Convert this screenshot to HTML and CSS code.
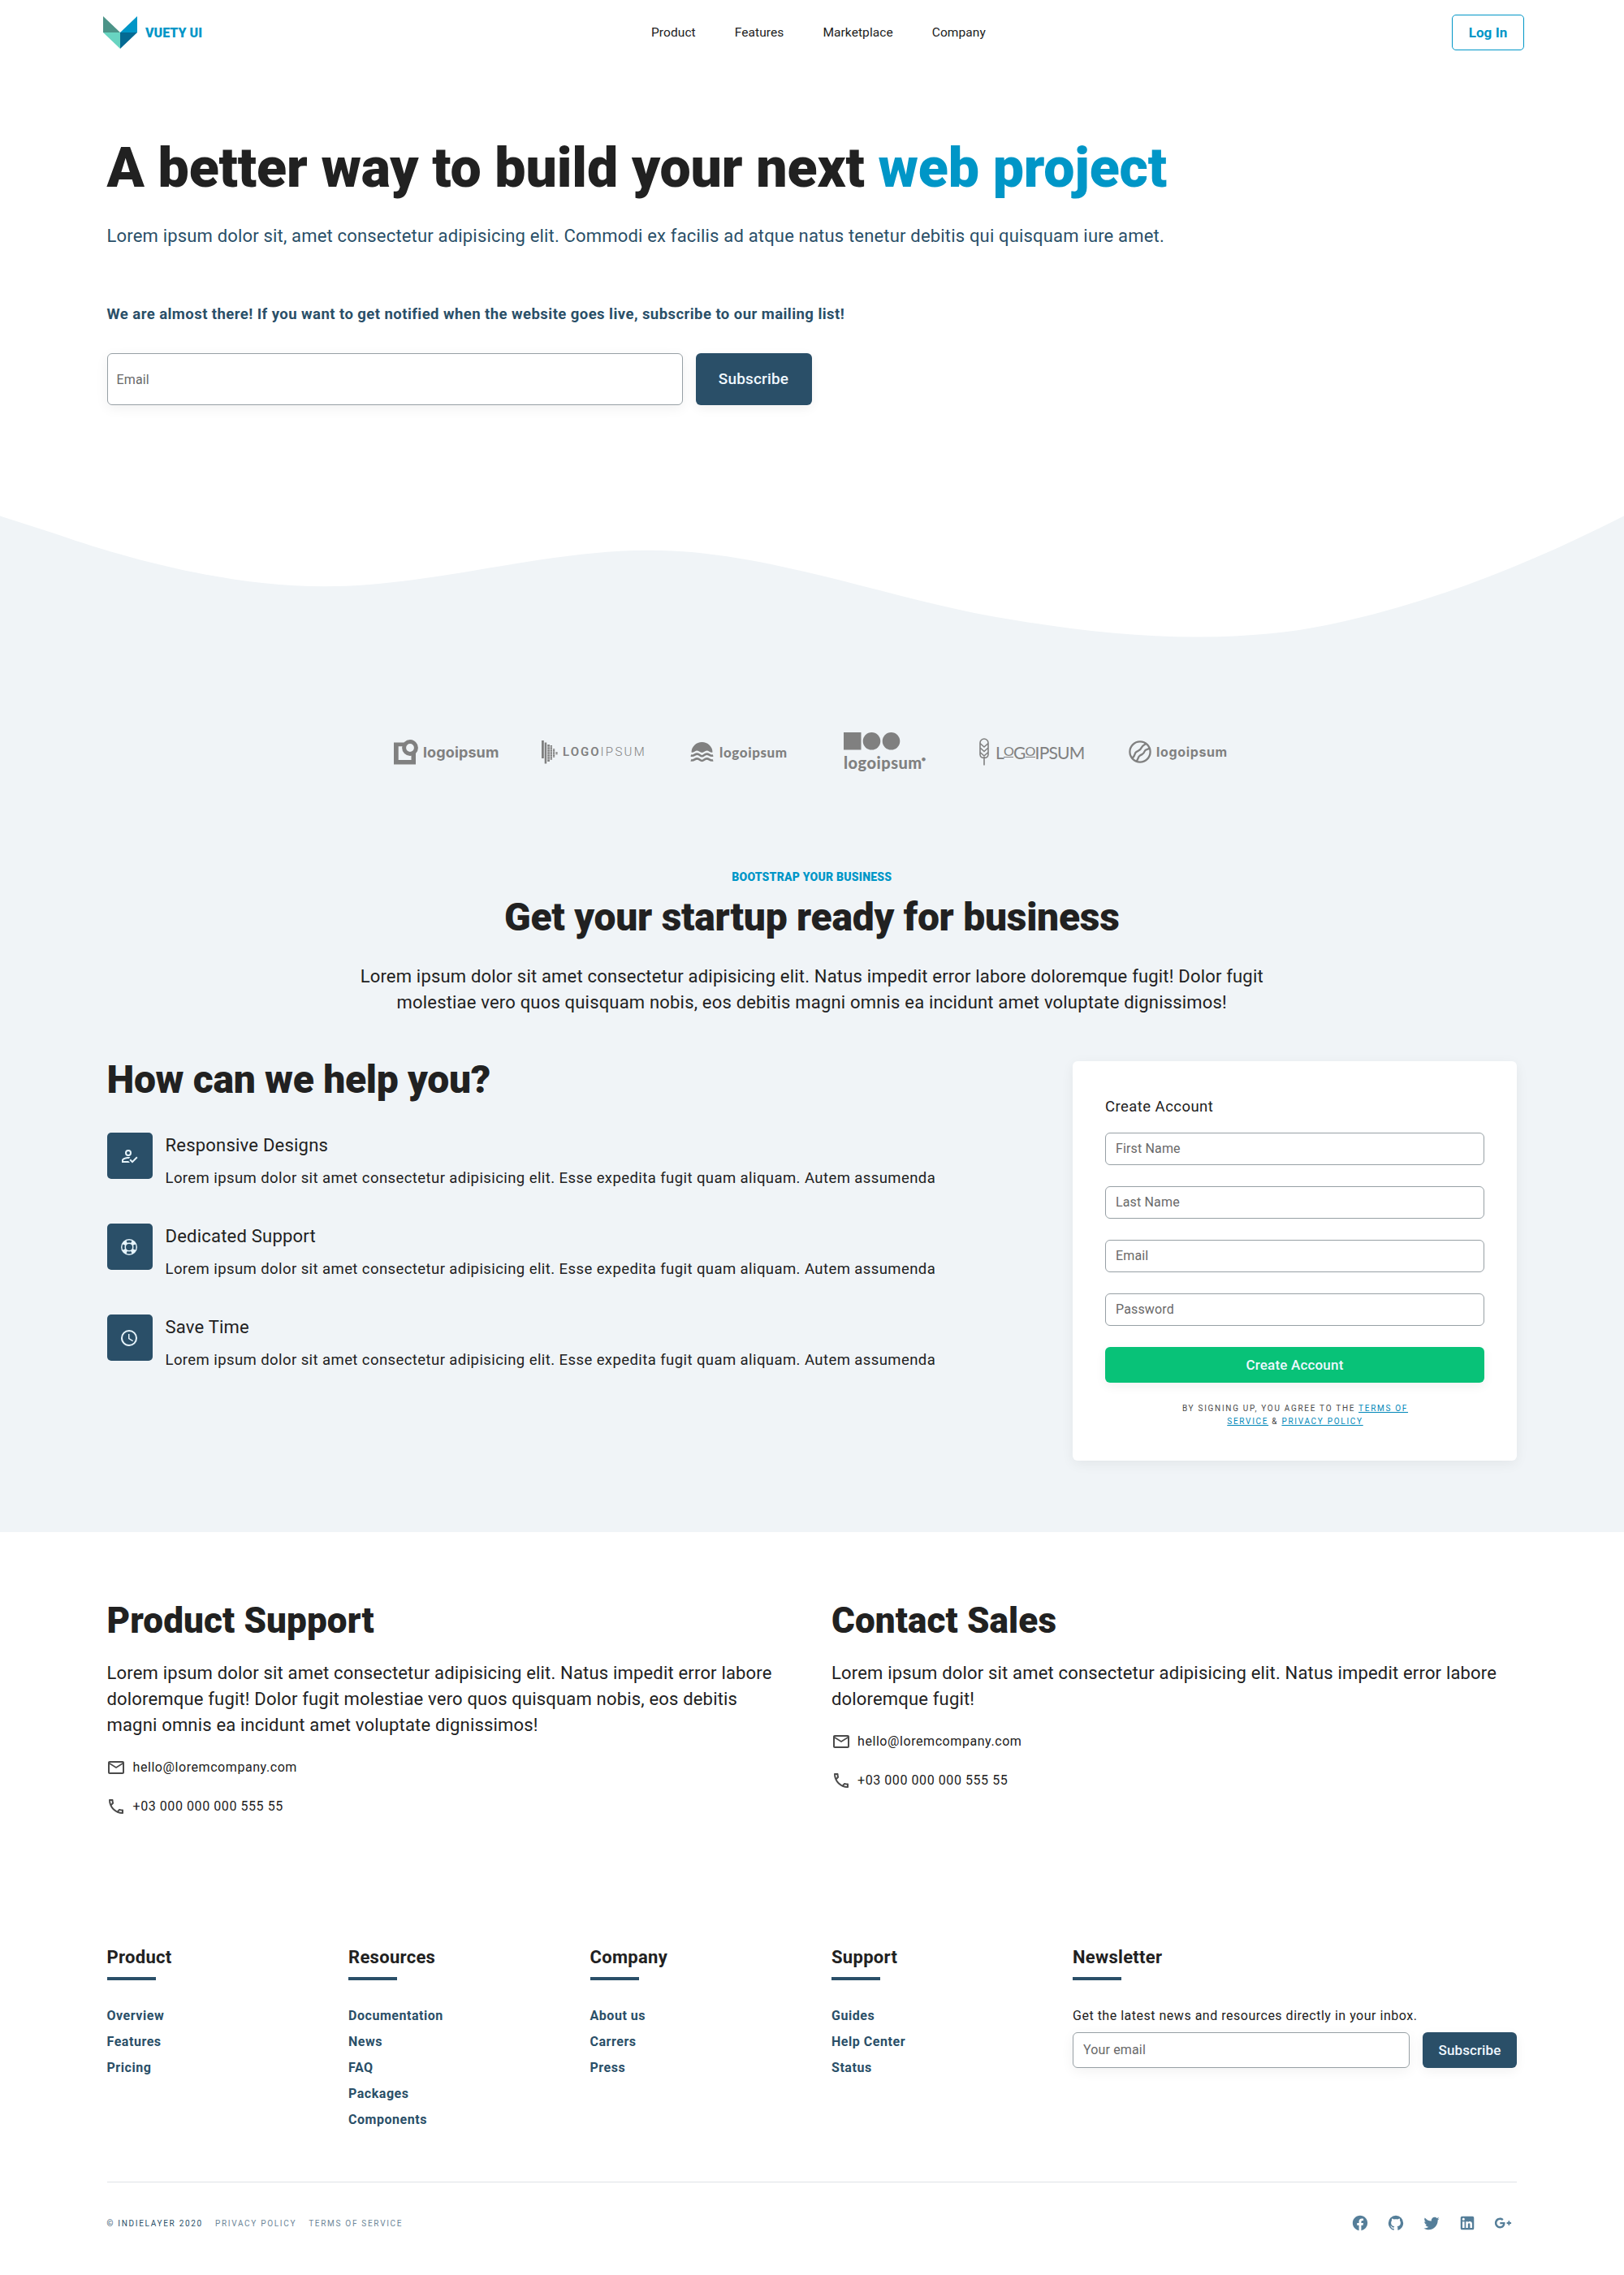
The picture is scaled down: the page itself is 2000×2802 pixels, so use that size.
FILE: index.html
```
<!DOCTYPE html>
<html lang="en">
<head>
<meta charset="utf-8">
<title>Vuety UI</title>
<link rel="stylesheet" href="styles.css">
</head>
<body>
<header class="header">
  <a class="brand">
    <svg class="brand-mark" viewBox="0 0 42 40"><path fill="#4c9488" d="M0 0L21 20H0z"/><path fill="#0096c7" d="M42 0L21 20H42z"/><path fill="#68d4c1" d="M0 20H21V40z"/><path fill="#056a93" d="M42 20H21V40z"/></svg>
    <span class="brand-name">VUETY UI</span>
  </a>
  <nav class="nav"><a>Product</a><a>Features</a><a>Marketplace</a><a>Company</a></nav>
  <a class="login">Log In</a>
</header>

<section class="hero">
  <h1 class="hero-title">A better way to build your next <span class="accent">web project</span></h1>
  <p class="hero-text">Lorem ipsum dolor sit, amet consectetur adipisicing elit. Commodi ex facilis ad atque natus tenetur debitis qui quisquam iure amet.</p>
  <p class="hero-note">We are almost there! If you want to get notified when the website goes live, subscribe to our mailing list!</p>
  <div class="hero-form">
    <div class="field field-large">Email</div>
    <div class="btn btn-large">Subscribe</div>
  </div>
</section>

<svg class="wave" viewBox="0 0 2000 180" preserveAspectRatio="none"><path d="M0 15.5L67 37C133 60 267 102.3 400 102.3C533 102.3 667 57.7 800 57.7C933 57.7 1067 108 1200 135C1333 160 1467 175 1600 156C1733 134 1867 83 2000 15.5V180H0z"/></svg>

<section class="business">
  <div class="logos">
    <div class="logo logo-a">
      <svg width="31" height="31" viewBox="0 0 31 31"><path fill-rule="evenodd" d="M0 3.5H27V30.5H0zM5.7 8.3V25H21.5V18L12 8.3z"/><circle class="badge" cx="20" cy="10" r="7.4"/></svg>
      <span>logoipsum</span>
    </div>
    <div class="logo logo-b">
      <svg width="20" height="30" viewBox="0 0 20 30"><path d="M0 1h2.8v22H0zM3.7 3.5h2.5v26H3.7zM7.2 6h2.7v21H7.2zM10.6 7h2.4v18h-2.4zM14 11h2.2v11H14zM17.4 15h2.2v3.6h-2.2z"/><path class="cut" d="M7 9h13M7 12h13M7 15h13M7 18h13M7 21h13M7 24h13"/></svg>
      <span><b>LOGO</b><i>IPSUM</i></span>
    </div>
    <div class="logo logo-c">
      <svg width="29" height="25" viewBox="0 0 29 25"><path d="M1.5 12.5A13 12.5 0 0 1 27.5 12.5C24 13.5 23 10.5 20.5 10.5S17 13 14.5 13 11 10.5 8.5 10.5 5 13.5 1.5 12.5z"/><path class="stroke" d="M.8 16.6C5 17.6 5.5 14.6 8.5 14.6S12 17.2 14.5 17.2 17.5 14.6 20.5 14.6 24 17.6 28.2 16.6M.8 22.4C5 23.4 5.5 20.4 8.5 20.4S12 23 14.5 23 17.5 20.4 20.5 20.4 24 23.4 28.2 22.4"/></svg>
      <span>logoipsum</span>
    </div>
    <div class="logo logo-d">
      <svg width="70" height="22" viewBox="0 0 70 22"><path d="M0 0h21.5v21.5H0z"/><circle cx="34.5" cy="10.8" r="10.8"/><circle cx="58.5" cy="10.8" r="10.8"/></svg>
      <span>logoipsum<sup>●</sup></span>
    </div>
    <div class="logo logo-e">
      <svg width="12" height="34" viewBox="0 0 12 34"><path class="stroke" d="M6 33.5V23M1 6a5 5 0 0 1 10 0V20.5A5 4.5 0 0 1 6 24.5 5 4.5 0 0 1 1 20.5zM1 6.5L6 11 11 6.5M1 12L6 16.5 11 12M1 17.5L6 22 11 17.5"/></svg>
      <span>L<u>O</u>G<u>O</u>IPSUM</span>
    </div>
    <div class="logo logo-f">
      <svg width="28" height="28" viewBox="0 0 28 28"><circle class="stroke" cx="14" cy="14" r="12.6"/><path class="stroke" d="M4 21.5C8 20.5 6.5 16 9.5 14S14.5 12 16 8.5 20 5.5 21 4M9 25.5C12.5 24 10.5 20.5 14 18.5S18.5 17 19.5 13.5 24 11.5 25.5 9.5"/></svg>
      <span>logoipsum</span>
    </div>
  </div>

  <div class="intro">
    <div class="intro-kicker">BOOTSTRAP YOUR BUSINESS</div>
    <h2 class="intro-title">Get your startup ready for business</h2>
    <p class="intro-text">Lorem ipsum dolor sit amet consectetur adipisicing elit. Natus impedit error labore doloremque fugit! Dolor fugit molestiae vero quos quisquam nobis, eos debitis magni omnis ea incidunt amet voluptate dignissimos!</p>
  </div>

  <div class="help">
    <div class="help-main">
      <h2 class="help-title">How can we help you?</h2>
      <div class="features">
        <div class="feature">
          <div class="feature-icon"><svg viewBox="0 0 24 24"><path d="M21.1 12.5L22.5 13.91L15.97 20.5L12.5 17L13.9 15.59L15.97 17.67L21.1 12.5M11 4A4 4 0 0 1 15 8A4 4 0 0 1 11 12A4 4 0 0 1 7 8A4 4 0 0 1 11 4M11 6A2 2 0 0 0 9 8A2 2 0 0 0 11 10A2 2 0 0 0 13 8A2 2 0 0 0 11 6M11 13C11.68 13 12.5 13.09 13.41 13.26L11.74 14.93L11 14.9C8.03 14.9 4.9 16.36 4.9 17V18.1H11.1L13 20H3V17C3 14.34 8.33 13 11 13Z"/></svg></div>
          <div><h3>Responsive Designs</h3><p>Lorem ipsum dolor sit amet consectetur adipisicing elit. Esse expedita fugit quam aliquam. Autem assumenda</p></div>
        </div>
        <div class="feature">
          <div class="feature-icon"><svg viewBox="0 0 24 24"><path d="M19.79,15.41C20.74,13.24 20.74,10.75 19.79,8.59L17.05,9.83C17.65,11.21 17.65,12.78 17.06,14.17L19.79,15.41M15.42,4.21C13.25,3.26 10.76,3.26 8.59,4.21L9.83,6.94C11.22,6.35 12.79,6.35 14.18,6.95L15.42,4.21M4.21,8.58C3.26,10.76 3.26,13.24 4.21,15.42L6.95,14.17C6.35,12.79 6.35,11.21 6.95,9.82L4.21,8.58M8.59,19.79C10.76,20.74 13.25,20.74 15.42,19.78L14.18,17.05C12.8,17.65 11.22,17.65 9.84,17.06L8.59,19.79M12,2A10,10 0 0,1 22,12A10,10 0 0,1 12,22A10,10 0 0,1 2,12A10,10 0 0,1 12,2M12,8A4,4 0 0,0 8,12A4,4 0 0,0 12,16A4,4 0 0,0 16,12A4,4 0 0,0 12,8Z"/></svg></div>
          <div><h3>Dedicated Support</h3><p>Lorem ipsum dolor sit amet consectetur adipisicing elit. Esse expedita fugit quam aliquam. Autem assumenda</p></div>
        </div>
        <div class="feature">
          <div class="feature-icon"><svg viewBox="0 0 24 24"><path d="M12,20A8,8 0 0,0 20,12A8,8 0 0,0 12,4A8,8 0 0,0 4,12A8,8 0 0,0 12,20M12,2A10,10 0 0,1 22,12A10,10 0 0,1 12,22C6.47,22 2,17.5 2,12A10,10 0 0,1 12,2M12.5,7V12.25L17,14.92L16.25,16.15L11,13V7H12.5Z"/></svg></div>
          <div><h3>Save Time</h3><p>Lorem ipsum dolor sit amet consectetur adipisicing elit. Esse expedita fugit quam aliquam. Autem assumenda</p></div>
        </div>
      </div>
    </div>
    <div class="card">
      <h3 class="card-title">Create Account</h3>
      <div class="card-fields">
        <div class="field">First Name</div>
        <div class="field">Last Name</div>
        <div class="field">Email</div>
        <div class="field">Password</div>
        <div class="btn btn-green">Create Account</div>
      </div>
      <div class="terms">
        <div>BY SIGNING UP, YOU AGREE TO THE <a>TERMS OF</a></div>
        <div><a>SERVICE</a> &amp; <a>PRIVACY POLICY</a></div>
      </div>
    </div>
  </div>
</section>

<section class="contact">
  <div>
    <h2>Product Support</h2>
    <p>Lorem ipsum dolor sit amet consectetur adipisicing elit. Natus impedit error labore doloremque fugit! Dolor fugit molestiae vero quos quisquam nobis, eos debitis magni omnis ea incidunt amet voluptate dignissimos!</p>
    <div class="line"><svg viewBox="0 0 24 24"><path d="M22 6C22 4.9 21.1 4 20 4H4C2.9 4 2 4.9 2 6V18C2 19.1 2.9 20 4 20H20C21.1 20 22 19.1 22 18V6M20 6L12 11L4 6H20M20 18H4V8L12 13L20 8V18Z"/></svg>hello@loremcompany.com</div>
    <div class="line"><svg viewBox="0 0 24 24"><path d="M20,15.5C18.8,15.5 17.5,15.3 16.4,14.9C16.3,14.9 16.2,14.9 16.1,14.9C15.8,14.9 15.6,15 15.4,15.2L13.2,17.4C10.4,15.9 8,13.6 6.6,10.8L8.8,8.6C9.1,8.3 9.2,7.9 9,7.6C8.7,6.5 8.5,5.2 8.5,4C8.5,3.5 8,3 7.5,3H4C3.5,3 3,3.5 3,4C3,13.4 10.6,21 20,21C20.5,21 21,20.5 21,20V16.5C21,16 20.5,15.5 20,15.5M5,5H6.5C6.6,5.9 6.8,6.8 7,7.6L5.8,8.8C5.4,7.6 5.1,6.3 5,5M19,19C17.7,18.9 16.4,18.6 15.2,18.2L16.4,17C17.2,17.2 18.1,17.4 19,17.4V19Z"/></svg>+03 000 000 000 555 55</div>
  </div>
  <div>
    <h2>Contact Sales</h2>
    <p>Lorem ipsum dolor sit amet consectetur adipisicing elit. Natus impedit error labore doloremque fugit!</p>
    <div class="line"><svg viewBox="0 0 24 24"><path d="M22 6C22 4.9 21.1 4 20 4H4C2.9 4 2 4.9 2 6V18C2 19.1 2.9 20 4 20H20C21.1 20 22 19.1 22 18V6M20 6L12 11L4 6H20M20 18H4V8L12 13L20 8V18Z"/></svg>hello@loremcompany.com</div>
    <div class="line"><svg viewBox="0 0 24 24"><path d="M20,15.5C18.8,15.5 17.5,15.3 16.4,14.9C16.3,14.9 16.2,14.9 16.1,14.9C15.8,14.9 15.6,15 15.4,15.2L13.2,17.4C10.4,15.9 8,13.6 6.6,10.8L8.8,8.6C9.1,8.3 9.2,7.9 9,7.6C8.7,6.5 8.5,5.2 8.5,4C8.5,3.5 8,3 7.5,3H4C3.5,3 3,3.5 3,4C3,13.4 10.6,21 20,21C20.5,21 21,20.5 21,20V16.5C21,16 20.5,15.5 20,15.5M5,5H6.5C6.6,5.9 6.8,6.8 7,7.6L5.8,8.8C5.4,7.6 5.1,6.3 5,5M19,19C17.7,18.9 16.4,18.6 15.2,18.2L16.4,17C17.2,17.2 18.1,17.4 19,17.4V19Z"/></svg>+03 000 000 000 555 55</div>
  </div>
</section>

<footer class="footer">
  <div class="footer-cols">
    <div class="col"><h4>Product</h4><a>Overview</a><a>Features</a><a>Pricing</a></div>
    <div class="col"><h4>Resources</h4><a>Documentation</a><a>News</a><a>FAQ</a><a>Packages</a><a>Components</a></div>
    <div class="col"><h4>Company</h4><a>About us</a><a>Carrers</a><a>Press</a></div>
    <div class="col"><h4>Support</h4><a>Guides</a><a>Help Center</a><a>Status</a></div>
    <div class="col"><h4>Newsletter</h4>
      <p>Get the latest news and resources directly in your inbox.</p>
      <div class="news-form"><div class="field field-news">Your email</div><div class="btn btn-news">Subscribe</div></div>
    </div>
  </div>
  <div class="bottom">
    <div class="legal"><span class="copy">© INDIELAYER 2020</span><a>PRIVACY POLICY</a><a>TERMS OF SERVICE</a></div>
    <div class="social">
      <svg viewBox="0 0 24 24"><path d="M12 2.04C6.5 2.04 2 6.53 2 12.06C2 17.06 5.66 21.21 10.44 21.96V14.96H7.9V12.06H10.44V9.85C10.44 7.34 11.93 5.96 14.22 5.96C15.31 5.96 16.45 6.15 16.45 6.15V8.62H15.19C13.95 8.62 13.56 9.39 13.56 10.18V12.06H16.34L15.89 14.96H13.56V21.96A10 10 0 0 0 22 12.06C22 6.53 17.5 2.04 12 2.04Z"/></svg>
      <svg viewBox="0 0 24 24"><path d="M12,2A10,10 0 0,0 2,12C2,16.42 4.87,20.17 8.84,21.5C9.34,21.58 9.5,21.27 9.5,21C9.5,20.77 9.5,20.14 9.5,19.31C6.73,19.91 6.14,17.97 6.14,17.97C5.68,16.81 5.03,16.5 5.03,16.5C4.12,15.88 5.1,15.9 5.1,15.9C6.1,15.97 6.63,16.93 6.63,16.93C7.5,18.45 8.97,18 9.54,17.76C9.63,17.11 9.89,16.67 10.17,16.42C7.95,16.17 5.62,15.31 5.62,11.5C5.62,10.39 6,9.5 6.65,8.79C6.55,8.54 6.2,7.5 6.75,6.15C6.75,6.15 7.59,5.88 9.5,7.17C10.29,6.95 11.15,6.84 12,6.84C12.85,6.84 13.71,6.95 14.5,7.17C16.41,5.88 17.25,6.15 17.25,6.15C17.8,7.5 17.45,8.54 17.35,8.79C18,9.5 18.38,10.39 18.38,11.5C18.38,15.32 16.04,16.16 13.81,16.41C14.17,16.72 14.5,17.33 14.5,18.26C14.5,19.6 14.5,20.68 14.5,21C14.5,21.27 14.66,21.59 15.17,21.5C19.14,20.16 22,16.42 22,12A10,10 0 0,0 12,2Z"/></svg>
      <svg viewBox="0 0 24 24"><path d="M22.46,6C21.69,6.35 20.86,6.58 20,6.69C20.88,6.16 21.56,5.32 21.88,4.31C21.05,4.81 20.13,5.16 19.16,5.36C18.37,4.5 17.26,4 16,4C13.65,4 11.73,5.92 11.73,8.29C11.73,8.63 11.77,8.96 11.84,9.27C8.28,9.09 5.11,7.38 3,4.79C2.63,5.42 2.42,6.16 2.42,6.94C2.42,8.43 3.17,9.75 4.33,10.5C3.62,10.5 2.96,10.3 2.38,10C2.38,10 2.38,10 2.38,10.03C2.38,12.11 3.86,13.85 5.82,14.24C5.46,14.34 5.08,14.39 4.69,14.39C4.42,14.39 4.15,14.36 3.89,14.31C4.43,16 6,17.26 7.89,17.29C6.43,18.45 4.58,19.13 2.56,19.13C2.22,19.13 1.88,19.11 1.54,19.07C3.44,20.29 5.7,21 8.12,21C16,21 20.33,14.46 20.33,8.79C20.33,8.6 20.33,8.42 20.32,8.23C21.16,7.63 21.88,6.87 22.46,6Z"/></svg>
      <svg viewBox="0 0 24 24"><path d="M19 3A2 2 0 0 1 21 5V19A2 2 0 0 1 19 21H5A2 2 0 0 1 3 19V5A2 2 0 0 1 5 3H19M18.5 18.5V13.2A3.26 3.26 0 0 0 15.24 9.94C14.39 9.94 13.4 10.46 12.92 11.24V10.13H10.13V18.5H12.92V13.57C12.92 12.8 13.54 12.17 14.31 12.17A1.4 1.4 0 0 1 15.71 13.57V18.5H18.5M6.88 8.56A1.68 1.68 0 0 0 8.56 6.88C8.56 5.95 7.81 5.19 6.88 5.19A1.69 1.69 0 0 0 5.19 6.88C5.19 7.81 5.95 8.56 6.88 8.56M8.27 18.5V10.13H5.5V18.5H8.27Z"/></svg>
      <svg viewBox="0 0 24 24"><path d="M23,11H21V9H19V11H17V13H19V15H21V13H23M8,11V13.4H12C11.8,14.4 10.8,16.4 8,16.4C5.6,16.4 3.7,14.4 3.7,12C3.7,9.6 5.6,7.6 8,7.6C9.4,7.6 10.3,8.2 10.8,8.7L12.7,6.9C11.5,5.7 9.9,5 8,5C4.1,5 1,8.1 1,12C1,15.9 4.1,19 8,19C12,19 14.7,16.2 14.7,12.2C14.7,11.7 14.7,11.4 14.6,11H8Z"/></svg>
    </div>
  </div>
</footer>
</body>
</html>
```
FILE: styles.css
```
* { box-sizing: border-box; }
body { margin: 0; background: #fff; color: #212121; font-family: Roboto, sans-serif; font-size: 16px; }
h1, h2, h3, h4, p { margin: 0; font-weight: 400; }
svg { display: block; flex: none; }

.header { display: flex; align-items: center; height: 80px; padding: 0 123px 0 127px; }
.brand { display: flex; align-items: center; gap: 10px; width: 675px; }
.brand-mark { width: 42px; height: 40px; }
.brand-name { color: #0096c7; font-weight: 900; }
.nav { display: flex; gap: 48px; flex: 1; font-size: 15.5px; letter-spacing: .08px; }
.login { width: 89px; height: 44px; border: 1px solid #0096c7; border-radius: 5px; color: #0096c7; font-size: 17px; font-weight: 700; letter-spacing: .06px; line-height: 43px; text-align: center; }

.hero { height: 540px; padding: 91px 131.5px 0; }
.hero-title { font-size: 68px; font-weight: 900; line-height: 72px; letter-spacing: -.12px; }
.accent { color: #0096c7; }
.hero-text { margin-top: 32px; color: #2a4f68; font-size: 22px; line-height: 32px; letter-spacing: .18px; }
.hero-note { margin-top: 66px; color: #2a4f68; font-size: 18.5px; font-weight: 700; line-height: 28px; letter-spacing: .44px; }
.hero-form { display: flex; gap: 16px; margin-top: 34px; }

.field { display: flex; align-items: center; height: 40px; padding: 0 12px 1px; border: 1px solid #97a0a5; border-radius: 6px; background: #fff; color: #696969; font-size: 16px; letter-spacing: .15px; }
.field-large { width: 709px; height: 64px; padding: 0 11px; box-shadow: 0 4px 16px rgba(0,0,0,.06); }
.btn { display: flex; align-items: center; justify-content: center; height: 44px; border-radius: 6px; background: #2a4f68; color: #f0f8ff; font-size: 17px; font-weight: 500; letter-spacing: .1px; box-shadow: 0 4px 14px rgba(0,0,0,.06); }
.btn-large { width: 143px; height: 64px; padding-bottom: 1px; font-size: 19px; letter-spacing: .16px; }

.wave { width: 100%; height: 180px; fill: #f0f4f7; }

.business { height: 1087px; padding: 96px 132px 0 131.5px; background: #f0f4f7; }
.logos { display: grid; grid-template-columns: 182px 183px 189px 167px 184px 125px; align-items: center; height: 60px; margin-left: 353.5px; color: #808080; }
.logo { display: flex; align-items: center; font-family: Inter, sans-serif; font-weight: 700; white-space: nowrap; }
.logo svg { fill: #808080; }
.logo .stroke { fill: none; stroke: #808080; stroke-width: 2.3; }
.logo .badge { fill: #f0f4f7; stroke: #808080; stroke-width: 5; }
.logo .cut { stroke: #f0f4f7; stroke-width: .5; }
.logo-a { gap: 5px; font-size: 18px; letter-spacing: .14px; }
.logo-b { gap: 6px; font-family: Roboto, sans-serif; font-size: 15px; }
.logo-b b { letter-spacing: 2px; font-weight: 600; }
.logo-b i { font-style: normal; font-weight: 300; letter-spacing: 2.3px; }
.logo-c { gap: 7px; font-family: Lato, sans-serif; font-size: 17px; font-weight: 900; letter-spacing: .6px; }
.logo-c .stroke { stroke-width: 2.6; }
.logo-d { flex-direction: column; align-items: flex-start; font-family: Lato, sans-serif; font-size: 20px; font-weight: 900; line-height: 22px; letter-spacing: .5px; gap: 4px; margin-top: -1px; }
.logo-d sup { font-size: 9px; line-height: 0; vertical-align: 9px; margin-left: -1px; }
.logo-e { gap: 8px; font-family: Lato, sans-serif; font-size: 21px; font-weight: 400; letter-spacing: -.8px; }
.logo-e .stroke { stroke-width: 1.6; }
.logo-e u { display: inline-block; font-size: 16px; line-height: 15px; text-decoration: none; border-bottom: 1.5px solid #808080; vertical-align: 4px; }
.logo-f { gap: 6px; font-size: 16px; letter-spacing: .65px; }

.intro { margin-top: 112px; text-align: center; }
.intro-kicker { color: #0096c7; font-size: 14px; font-weight: 900; line-height: 25px; letter-spacing: .212px; }
.intro-title, .help-title { font-size: 48px; font-weight: 900; line-height: 56px; letter-spacing: -.3px; }
.intro-title { margin-top: 9px; letter-spacing: -.265px; }
.intro-text { width: 1160px; margin: 29px auto 0; font-size: 22px; line-height: 32px; letter-spacing: .19px; }

.help { display: grid; grid-template-columns: 1fr 547px; margin-top: 51px; align-items: start; }
.features { display: flex; flex-direction: column; gap: 42px; margin-top: 37px; }
.feature { display: flex; gap: 16px; }
.feature-icon { display: flex; align-items: center; justify-content: center; width: 56px; height: 57px; border-radius: 5px; background: #2a4f68; }
.feature-icon svg { width: 24px; height: 24px; margin-right: 1px; fill: #e6f4fb; }
.feature h3 { font-size: 22px; line-height: 32px; letter-spacing: .22px; }
.feature p { margin-top: 10px; font-size: 18.5px; line-height: 28px; letter-spacing: .42px; }

.card { height: 492px; margin-top: 5px; padding: 42px 40px 0; border-radius: 6px; background: #fff; box-shadow: 0 4px 16px rgba(0,0,0,.06); }
.card-title { font-size: 18.5px; line-height: 28px; letter-spacing: .45px; }
.card-fields { display: flex; flex-direction: column; gap: 26px; margin-top: 18px; }
.btn-green { background: #08c278; letter-spacing: .18px; }
.terms { margin-top: 24px; padding-left: 1px; color: #4a4a4a; font-size: 10px; line-height: 16px; letter-spacing: 1.7px; text-align: center; }
.terms a { color: #0087b8; text-decoration: underline; }

.contact { display: grid; grid-template-columns: 1fr 1fr; gap: 48px; height: 507px; padding: 85px 131.5px 0; }
.contact h2 { font-size: 44px; font-weight: 900; line-height: 48px; letter-spacing: .13px; }
.contact p { width: 835px; margin-top: 25px; font-size: 22px; line-height: 32px; letter-spacing: .18px; }
.line { display: flex; align-items: center; gap: 8px; margin-top: 24px; line-height: 24px; letter-spacing: .57px; }
.line svg { width: 24px; height: 24px; margin-left: -.5px; margin-right: .5px; fill: #4a4a4a; }

.footer { padding: 0 132px 0 131.5px; }
.footer-cols { display: grid; grid-template-columns: repeat(3, 297.5px) 297px 547px; height: 293px; }
.col h4 { width: max-content; margin-bottom: 28px; padding-top: 1px; font-size: 22px; font-weight: 700; line-height: 32px; letter-spacing: .3px; }
.col h4::after { content: ""; display: block; width: 60px; height: 4px; margin-top: 8px; background: #2a4f68; }
.col a { display: block; color: #2a4f68; font-weight: 700; line-height: 32px; letter-spacing: .54px; }
.col p { line-height: 32px; letter-spacing: .51px; }
.news-form { display: flex; gap: 16px; margin-top: 4px; }
.field-news { flex: 1; height: 44px; box-shadow: 0 4px 16px rgba(0,0,0,.06); }
.btn-news { width: 116px; }

.bottom { display: flex; align-items: center; justify-content: space-between; height: 101px; margin-bottom: 14px; border-top: 1px solid #dfe3e6; }
.legal { display: flex; gap: 15px; font-size: 10px; letter-spacing: 1.7px; }
.legal .copy { color: #2a4f68; }
.legal a { color: #6d8698; }
.social { display: flex; gap: 22px; padding-right: 6px; }
.social svg { width: 22px; height: 22px; fill: #557e99; }
```
